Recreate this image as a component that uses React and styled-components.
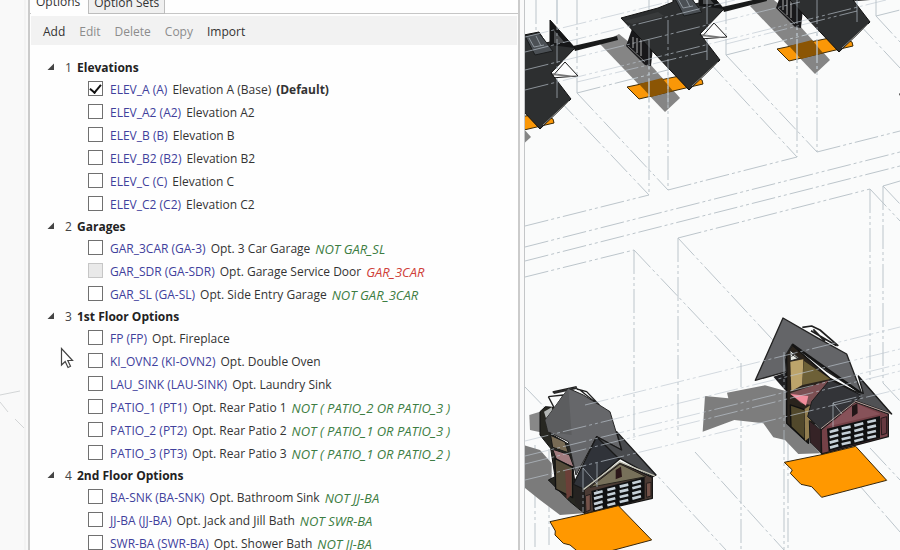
import React, { useState } from "react";
import styled, { createGlobalStyle } from "styled-components";

const GlobalStyle = createGlobalStyle`
  * { box-sizing: border-box; }
  html, body { margin: 0; background: #fafbfb; overflow: hidden; }
  body, button, input {
    font-family: "Open Sans", "Noto Sans", sans-serif;
    font-size: 12px;
    line-height: 16px;
  }
`;

const Workspace = styled.main`
  display: grid;
  grid-template-columns: 28px minmax(0, 497fr) minmax(0, 375fr);
  height: 100vh;
  overflow: hidden;
`;

const Gutter = styled.svg`
  width: 100%;
  height: 100%;
  background: #f9f9f9;
`;

const Dock = styled.div`
  display: flex;
  min-width: 0;
  min-height: 0;
  padding-right: 4px;
  background: #fafafa;
  border-right: 1px solid #c4c6c8;
`;

const Panel = styled.section`
  position: relative;
  flex: 1;
  min-width: 0;
  overflow: hidden;
  display: flex;
  flex-direction: column;
  background: #fefefe;
  border: solid #cbcbcb;
  border-width: 0 2px;
`;

const TabStrip = styled.div`
  display: flex;
  align-items: flex-end;
  height: 14px;
  flex: none;
  padding-left: 1px;
  background: linear-gradient(#c6c6c6, #c6c6c6) bottom / 100% 1px no-repeat;
`;

const Tab = styled.button`
  height: 22px;
  padding: ${(p) => (p.$active ? "0 8px 2px 5px" : "0 5px")};
  color: #333;
  background: ${(p) => (p.$active ? "#fefefe" : "#f0f0f0")};
  border: solid #bdbdbd;
  border-width: ${(p) => (p.$active ? "0" : "1px")};
  white-space: nowrap;
`;

const Toolbar = styled.div`
  display: flex;
  align-items: center;
  flex: none;
  gap: 14px;
  height: 29px;
  margin: 2px 1px 0;
  padding: 2px 12px 0;
  background: #f2f2f2;
`;

const ToolButton = styled.button`
  padding: 0;
  border: 0;
  background: none;
  color: #333;
  &:disabled { color: #8c8c8c; }
`;

const Tree = styled.ul`
  list-style: none;
  margin: 0;
  padding: 12px 0 0 17px;
`;

const GroupHeader = styled.button`
  display: flex;
  align-items: center;
  height: 21px;
  padding: 0;
  border: 0;
  background: none;
  color: #222;
  white-space: nowrap;
`;

const Arrow = styled.svg`
  width: 8px;
  height: 8px;
  margin: 0 10px 2px 0;
`;

const GroupNumber = styled.span`
  width: 12px;
  text-align: left;
  color: #444;
`;

const Options = styled.ul`
  list-style: none;
  margin: 0;
  padding: 0 0 0 41px;
`;

const OptionRow = styled.li`
  display: flex;
  align-items: center;
  gap: 7px;
  height: 23px;
`;

const CheckBox = styled.input`
  appearance: none;
  flex: none;
  display: grid;
  place-items: center;
  width: 15px;
  height: 15px;
  margin: 0 0 2px;
  background: #fff;
  border: 1px solid #707070;
  &:checked::after {
    content: "";
    width: 5px;
    height: 9px;
    margin-bottom: 3px;
    border: solid #111;
    border-width: 0 2px 2px 0;
    transform: rotate(40deg);
  }
  &:disabled { background: #e9e9e9; border-color: #c6c6c6; }
`;

const OptionLabel = styled.label`
  display: flex;
  gap: 5px;
  white-space: nowrap;
  color: #333;
`;

const Code = styled.span`
  color: #40409c;
`;

const Rule = styled.em`
  font-size: 13px;
  color: ${(p) => (p.$blocked ? "#cf4038" : "#3c7d42")};
`;

const Pointer = styled.svg`
  position: absolute;
  left: 30px;
  top: 347px;
  width: 14px;
  height: 22px;
  pointer-events: none;
`;

const Viewport = styled.svg`
  display: block;
  width: 100%;
  height: 100%;
  min-height: 0;
  background: #fafbfb;
`;

const groups = [
  { title: "Elevations", options: [
    { id: "ELEV_A", code: "A", name: "Elevation A (Base)", isDefault: true },
    { id: "ELEV_A2", code: "A2", name: "Elevation A2" },
    { id: "ELEV_B", code: "B", name: "Elevation B" },
    { id: "ELEV_B2", code: "B2", name: "Elevation B2" },
    { id: "ELEV_C", code: "C", name: "Elevation C" },
    { id: "ELEV_C2", code: "C2", name: "Elevation C2" },
  ] },
  { title: "Garages", options: [
    { id: "GAR_3CAR", code: "GA-3", name: "Opt. 3 Car Garage", rule: "NOT GAR_SL" },
    { id: "GAR_SDR", code: "GA-SDR", name: "Opt. Garage Service Door", rule: "GAR_3CAR", blocked: true },
    { id: "GAR_SL", code: "GA-SL", name: "Opt. Side Entry Garage", rule: "NOT GAR_3CAR" },
  ] },
  { title: "1st Floor Options", options: [
    { id: "FP", code: "FP", name: "Opt. Fireplace" },
    { id: "KI_OVN2", code: "KI-OVN2", name: "Opt. Double Oven" },
    { id: "LAU_SINK", code: "LAU-SINK", name: "Opt. Laundry Sink" },
    { id: "PATIO_1", code: "PT1", name: "Opt. Rear Patio 1", rule: "NOT ( PATIO_2 OR PATIO_3 )" },
    { id: "PATIO_2", code: "PT2", name: "Opt. Rear Patio 2", rule: "NOT ( PATIO_1 OR PATIO_3 )" },
    { id: "PATIO_3", code: "PT3", name: "Opt. Rear Patio 3", rule: "NOT ( PATIO_1 OR PATIO_2 )" },
  ] },
  { title: "2nd Floor Options", options: [
    { id: "BA-SNK", code: "BA-SNK", name: "Opt. Bathroom Sink", rule: "NOT JJ-BA" },
    { id: "JJ-BA", code: "JJ-BA", name: "Opt. Jack and Jill Bath", rule: "NOT SWR-BA" },
    { id: "SWR-BA", code: "SWR-BA", name: "Opt. Shower Bath", rule: "NOT JJ-BA" },
  ] },
];

function Group({ number, group }) {
  const [open, setOpen] = useState(true);
  return (
    <li>
      <GroupHeader aria-expanded={open} onClick={() => setOpen(!open)}>
        <Arrow viewBox="0 0 8 8" aria-hidden="true"><path d="M7 0.5V7H0.5Z" fill="#444" /></Arrow>
        <GroupNumber>{number}</GroupNumber>
        <strong>{group.title}</strong>
      </GroupHeader>
      {open && (
        <Options>
          {group.options.map((o) => (
            <OptionRow key={o.id}>
              <CheckBox type="checkbox" id={o.id} defaultChecked={o.isDefault} disabled={o.blocked} />
              <OptionLabel htmlFor={o.id}>
                <Code>{o.id} ({o.code})</Code>
                <span>{o.name}</span>
                {o.isDefault && <strong>(Default)</strong>}
                {o.rule && <Rule $blocked={o.blocked}>{o.rule}</Rule>}
              </OptionLabel>
            </OptionRow>
          ))}
        </Options>
      )}
    </li>
  );
}

/* Rear row of houses: dark roofs seen from above. */
function RoofShadow() {
  return (
    <g>
      <path d="M600 44L619 34L635 47L680 98L665 112Z" fill="#858585" />
      <path d="M627 87L689 74L702 80L703 84L690 87L639 99Z" fill="#fa9707" stroke="#3c2a08" />
      <path d="M639 84L662 78L673 91L651 97Z" fill="#8b5504" />
    </g>
  );
}

function RoofHouse() {
  return (
    <g strokeLinejoin="round">
      <path d="M714 23L727 37L700 39L714 23" fill="#fdfdfd" stroke="#191919" />
      <path d="M700 34L724 37L720 38L700 36Z" fill="#777" />
      <path d="M722 7L766 -3L767 1L724 12Z" fill="#191a1a" />
      <path d="M626 46L632 29L642 31L653 47L651 66L645 65Z" fill="#18181a" />
      <path d="M633 37V48M637 38V53M641 39V56" stroke="#aaa" />
      <path d="M628 46L645 62" stroke="#777" />
      <path d="M621 18L658 8L673 2V-4L688 -7L695 4L699 3V-19L724 9L700 34L720 60L689 90Z" fill="#2d2f30" stroke="#111" />
      <path d="M624 21L658 12L664 16L632 24Z" fill="#383a3b" />
      <path d="M674 -3L688 -6L702 12L684 16Z" fill="#4b5055" stroke="#1b1d1e" />
      <path d="M678 -1L683 8L693 6M685 -3L690 7" stroke="#8f979e" fill="none" />
      <path d="M699 -19V6L724 9Z" fill="#151617" />
      <path d="M703 -9V4H714Z" fill="#4a4c4e" />
      <path d="M692 86L718 62" stroke="#8a8a86" />
    </g>
  );
}

/* Front row, nearer house with a tan gable. */
function TanHouse() {
  return (
    <g transform="translate(520 370) scale(0.3333)" strokeLinejoin="round">
      <path d="M10 225L60 240L95 280L95 340L190 430L120 435L60 390L10 350Z" fill="#7b7b7b" />
      <path d="M28 135L60 125L75 190L30 180Z" fill="#888" />
      <path d="M98 66L170 50M85 80L130 75L105 118L85 80M170 57L200 65L238 105M180 60L205 80L230 100" fill="none" stroke="#202020" strokeWidth="4" />
      <path d="M98 66L170 51L173 56L102 72Z" fill="#282828" />
      <path d="M60 125L76 110L100 112L90 190L150 225L165 340L195 355V432L150 395L85 330L105 320L92 235L60 195Z" fill="#272721" stroke="#111" strokeWidth="3" />
      <path d="M72 125L95 112L98 122L78 145Z" fill="#b4b7b5" />
      <path d="M92 196L135 216L145 248L98 232Z" fill="#786b55" stroke="#171717" strokeWidth="3" />
      <path d="M98 238L148 254L162 292L110 270Z" fill="#a17b7e" stroke="#171717" strokeWidth="3" />
      <path d="M105 265L158 292V383L107 357Z" fill="#544b39" stroke="#111" strokeWidth="4" />
      <path d="M135 295L154 302V375L140 388Z" fill="#6b3f38" />
      <path d="M145 55L190 75L270 125L288 185L305 240L230 200L168 315L145 215L85 185L76 150Z" fill="#66676a" stroke="#252525" strokeWidth="3" />
      <path d="M145 55L76 150L85 185L155 195Z" fill="#5c5d5f" />
      <path d="M290 185L408 315L398 320L300 265L235 300L230 200L305 240Z" fill="#494b4e" stroke="#191919" strokeWidth="4" />
      <path d="M230 200L298 268L192 358L160 343Z" fill="#303339" stroke="#191919" strokeWidth="4" />
      <path d="M192 360L300 277L397 322V385L195 432Z" fill="#4b3b34" stroke="#151515" strokeWidth="4" />
      <path d="M210 352L300 282L378 320Z" fill="#77705a" stroke="#25231c" strokeWidth="3" />
      <path d="M190 359L299 276L404 318" fill="none" stroke="#c6c5b6" strokeWidth="4" />
      <path d="M287 300L303 290L306 320L287 328Z" fill="#2c1719" />
      <path d="M160 345L193 360V430L166 400Z" fill="#252321" />
      <path d="M214 363L374 321V386L220 430Z" fill="#101112" />
      <path d="M222 371L248 364M262 360L286 354M299 350L325 344M337 340L363 333M222 386L248 379M262 375L286 369M299 365L325 359M337 355L363 348M222 402L248 395M262 391L286 385M299 381L325 375M337 371L363 364M224 417L248 410M262 406L286 400M299 396L325 390M337 386L363 379" stroke="#c5d0d8" strokeWidth="8" />
      <path d="M196 378L211 373V420L198 425ZM379 340L393 337V378L380 382Z" fill="#75534a" stroke="#241d1b" strokeWidth="3" />
      <path d="M90 455L190 433L295 407L395 510L245 550L180 550L150 525L130 520L105 495L106 483Z" fill="#ff9800" stroke="#362509" strokeWidth="3" />
    </g>
  );
}

/* Front row, house with a brick gable and open side bay. */
function BrickHouse() {
  return (
    <g transform="translate(695 310) scale(0.3333)" strokeLinejoin="round">
      <path d="M30 258L100 265L96 248L210 226L280 245V330L375 430L310 432L270 390L235 382L205 340L118 330L23 365Z" fill="#7d7d7d" />
      <path d="M235 200L280 185L290 260L270 240Z" fill="#202022" />
      <path d="M275 130L292 105L405 205L500 255L345 350L340 400L275 340Z" fill="#29231c" stroke="#111" strokeWidth="4" />
      <path d="M286 155L325 148L322 225L289 244Z" fill="#bca46b" />
      <path d="M326 152L406 207L322 225Z" fill="#6d6037" />
      <path d="M285 120L312 145L286 153Z" fill="#e7eae5" stroke="#222" strokeWidth="3" />
      <path d="M290 140L306 122M287 130L310 147" stroke="#333" strokeWidth="3" />
      <path d="M285 250L405 210L350 285L318 280Z" fill="#7c5053" />
      <path d="M286 252L340 258L333 287Z" fill="#f18d9c" />
      <path d="M286 285L330 300V390L288 350Z" fill="#51482b" stroke="#111" strokeWidth="4" />
      <path d="M329 297L347 285V380L330 392Z" fill="#927e50" />
      <path d="M322 52L350 48L375 60L430 108M355 58L390 94M348 62L425 107" fill="none" stroke="#202020" strokeWidth="5" />
      <path d="M264 24L370 85L455 132L500 250L397 185L292 103L270 140L275 185L181 211Z" fill="#646568" stroke="#222" strokeWidth="4" />
      <path d="M292 103L503 253" stroke="#151515" strokeWidth="7" />
      <path d="M490 198L590 312L480 272L410 300L440 235L505 250Z" fill="#505154" stroke="#191919" strokeWidth="4" />
      <path d="M405 209L500 257L480 277L378 358L338 320L350 275Z" fill="#333438" stroke="#1b1b1b" strokeWidth="3" />
      <path d="M378 359L480 276L580 312V380L380 432Z" fill="#744147" stroke="#171717" strokeWidth="4" />
      <path d="M395 350L482 280L558 312Z" fill="#875259" />
      <path d="M378 356L482 274L586 311" fill="none" stroke="#b8a19b" strokeWidth="3" />
      <path d="M471 288L487 280L488 310L471 321Z" fill="#211617" />
      <path d="M343 332L378 360V430L345 397Z" fill="#352326" stroke="#181818" strokeWidth="3" />
      <path d="M396 356L555 318V384L401 424Z" fill="#101112" />
      <path d="M404 366L430 359M440 356L467 350M478 347L505 340M517 337L543 331M404 382L430 375M440 372L467 366M478 363L505 356M517 353L543 347M404 398L430 391M440 388L467 382M478 379L505 372M517 369L543 363M405 413L430 406M440 403L467 397M478 394L505 387M517 384L543 378" stroke="#c5d0d8" strokeWidth="8" />
      <path d="M558 325L575 320V370L560 375Z" fill="#663940" stroke="#231719" strokeWidth="3" />
      <path d="M268 457L375 435L482 409L575 511L380 562L350 530L318 523L286 490L292 480Z" fill="#ff9800" stroke="#362509" strokeWidth="3" />
    </g>
  );
}

const lotLines = `
  M536 0V60M557 0V98M577 0V93M649 0V195M668 0V190M707 0V60M726 0V55M797 0V157M817 0V152M857 0V22M876 0V16
  M557 98L649 195M577 93L668 190M707 60L797 157M726 55L817 152M857 22L900 68M876 16L900 42
  M525 106L557 98M577 93L707 60M726 55L857 22M876 16L900 10
  M525 226L649 195M668 190L797 157M817 152L900 131
  M525 247L900 152M525 261L900 166M525 277L634 250M678 238L870 189M883 186L900 181
  M634 250V440M678 238V436M870 189V380M883 186V383
  M634 250L741 363M678 238L784 352M870 189L900 221M883 186L900 204M883 383L900 401
  M549 410V545M535 445V550M583 468V550M597 463V550M741 363V550M784 352V550M788 440V550
  M525 387L556 419M640 457L726 550M695 452L784 550M870 448L900 480M860 486L900 532`;

const overLines = `
  M525 37L668 2M525 52L735 0M525 70L800 2M525 90L886 0M577 82L707 51M726 44L857 11
  M585 405L900 327M525 441L900 349M525 456L900 364M525 464L900 371M525 480L900 389
  M583 468V512M597 463V505M583 468L597 484M784 352V440M833 403V430M833 403L865 395M833 403L842 414M557 0V98M707 0V60M857 0V22M649 40V112M668 20V105M797 0V70M817 0V70`;

export default function App() {
  return (
    <>
      <GlobalStyle />
      <Workspace>
        <Gutter viewBox="0 0 28 550" preserveAspectRatio="xMinYMin slice" aria-hidden="true">
          <path d="M0 395L20 391M0 402L8 412M15 419L24 428" stroke="#d3d5d6" fill="none" />
          <path d="M25 0V550" stroke="#ededed" fill="none" />
        </Gutter>
        <Dock>
          <Panel aria-label="Options">
            <TabStrip role="tablist">
              <Tab role="tab" aria-selected="true" $active>Options</Tab>
              <Tab role="tab" aria-selected="false">Option Sets</Tab>
            </TabStrip>
            <Toolbar>
              <ToolButton>Add</ToolButton>
              <ToolButton disabled>Edit</ToolButton>
              <ToolButton disabled>Delete</ToolButton>
              <ToolButton disabled>Copy</ToolButton>
              <ToolButton>Import</ToolButton>
            </Toolbar>
            <Tree>
              {groups.map((g, i) => <Group key={g.title} number={i + 1} group={g} />)}
            </Tree>
            <Pointer viewBox="0 0 14 22" aria-hidden="true">
              <path d="M1.5 1.5V18L5.2 14.5L8 20.5L10.5 19.2L7.8 13.5H12.5Z" fill="#fff" stroke="#444" strokeWidth="1.2" />
            </Pointer>
          </Panel>
        </Dock>
        <Viewport viewBox="525 0 375 550" preserveAspectRatio="xMinYMin slice" role="img" aria-label="3D house plans">
          <g transform="translate(-149 39)"><RoofShadow /></g>
          <RoofShadow />
          <g transform="translate(150 -38)"><RoofShadow /></g>
          <path d={lotLines} fill="none" stroke="#bcc5cb" strokeDasharray="24 3 3 3 3 3" />
          <g transform="translate(-149 39)"><RoofHouse /></g>
          <RoofHouse />
          <g transform="translate(150 -38)"><RoofHouse /></g>
          <path d="M899 94L900 93V96Z" fill="#333" />
          <TanHouse />
          <BrickHouse />
          <path d={overLines} fill="none" stroke="#bdc6cf" strokeOpacity="0.65" strokeDasharray="24 3 3 3 3 3" />
        </Viewport>
      </Workspace>
    </>
  );
}
